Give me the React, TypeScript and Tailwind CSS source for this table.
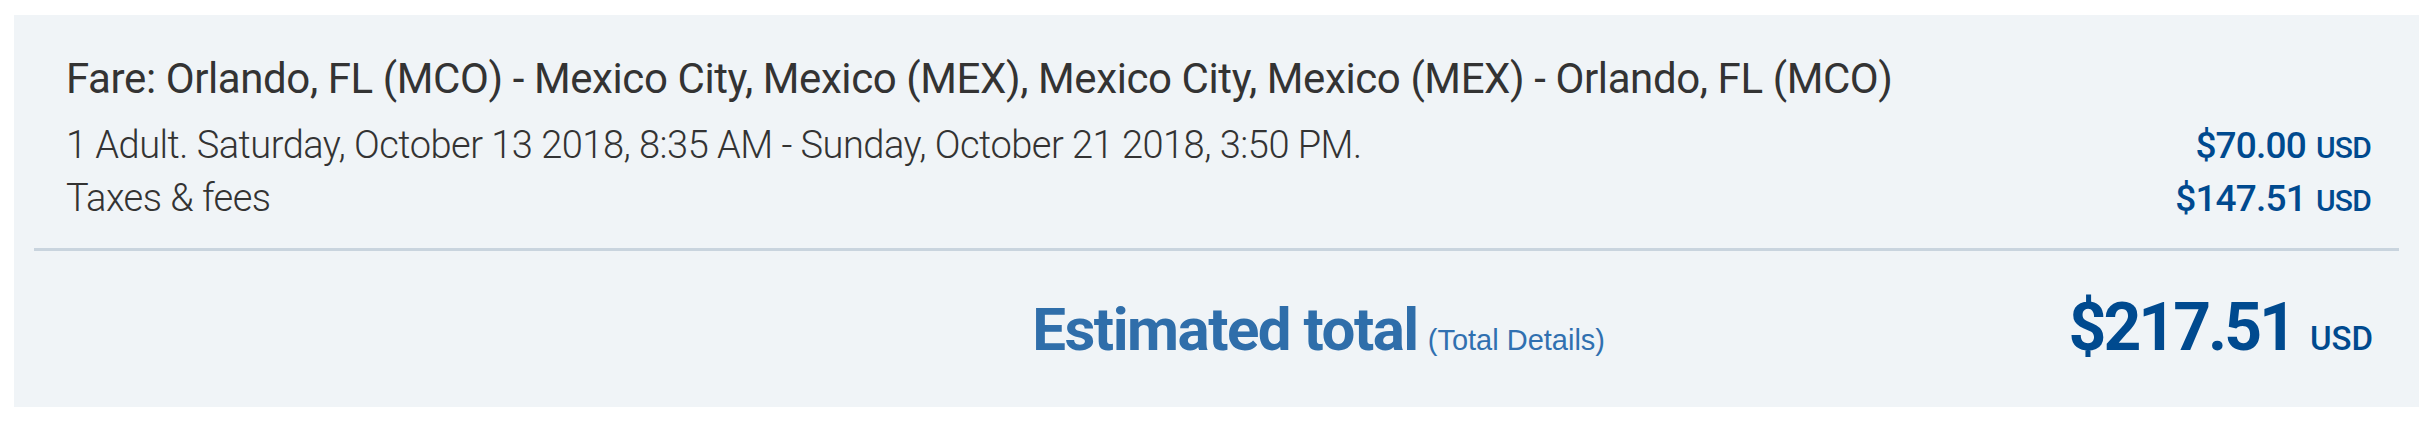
export default function App() {
  const rows = [
    { label: '1 Adult. Saturday, October 13 2018, 8:35 AM - Sunday, October 21 2018, 3:50 PM.', price: '$70.00' },
    { label: 'Taxes & fees', price: '$147.51' },
  ]

  return (
    <div className="min-h-screen bg-white pt-[15px] pl-[14px] pr-[12px] font-['Roboto',sans-serif]">
      <div className="h-[392px] bg-[#f0f4f7] px-[20px] pt-[36px]">
        <div className="pl-[32px] pr-[28px] text-[#333333]">
          <h2 className="h-[56px] text-[42px] leading-[56px] font-normal tracking-[-0.4px]">
            Fare: Orlando, FL (MCO) - Mexico City, Mexico (MEX), Mexico City, Mexico (MEX) - Orlando, FL (MCO)
          </h2>
          <div className="mt-[12px]">
            {rows.map((row) => (
              <div key={row.price} className="flex h-[53px] items-baseline justify-between leading-[53px]">
                <span className="text-[38px] font-light tracking-[-0.5px]">{row.label}</span>
                <span className="text-[#004a8f] font-medium tracking-[-0.8px]">
                  <span className="text-[37px]">{row.price}</span>
                  <span className="ml-[10px] text-[30px]">USD</span>
                </span>
              </div>
            ))}
          </div>
        </div>

        <div className="mt-[23px] h-[3px] bg-[#c9d4de]" />

        <div className="flex items-baseline pt-[37px] leading-[80px]">
          <div className="flex flex-1 items-baseline justify-end">
            <span className="text-[60px] font-bold text-[#2f6eaa] tracking-[-1.5px]">Estimated total</span>
            <span className="ml-[10px] font-['Liberation_Sans',sans-serif] text-[29px] text-[#3070b0]">
              (Total Details)
            </span>
          </div>
          <div className="w-[794px] pr-[26px] text-right text-[#004a8f] font-bold">
            <span className="text-[66px] tracking-[-3px]">$217.51</span>
            <span className="ml-[16px] text-[33px] font-medium">USD</span>
          </div>
        </div>
      </div>
    </div>
  )
}
